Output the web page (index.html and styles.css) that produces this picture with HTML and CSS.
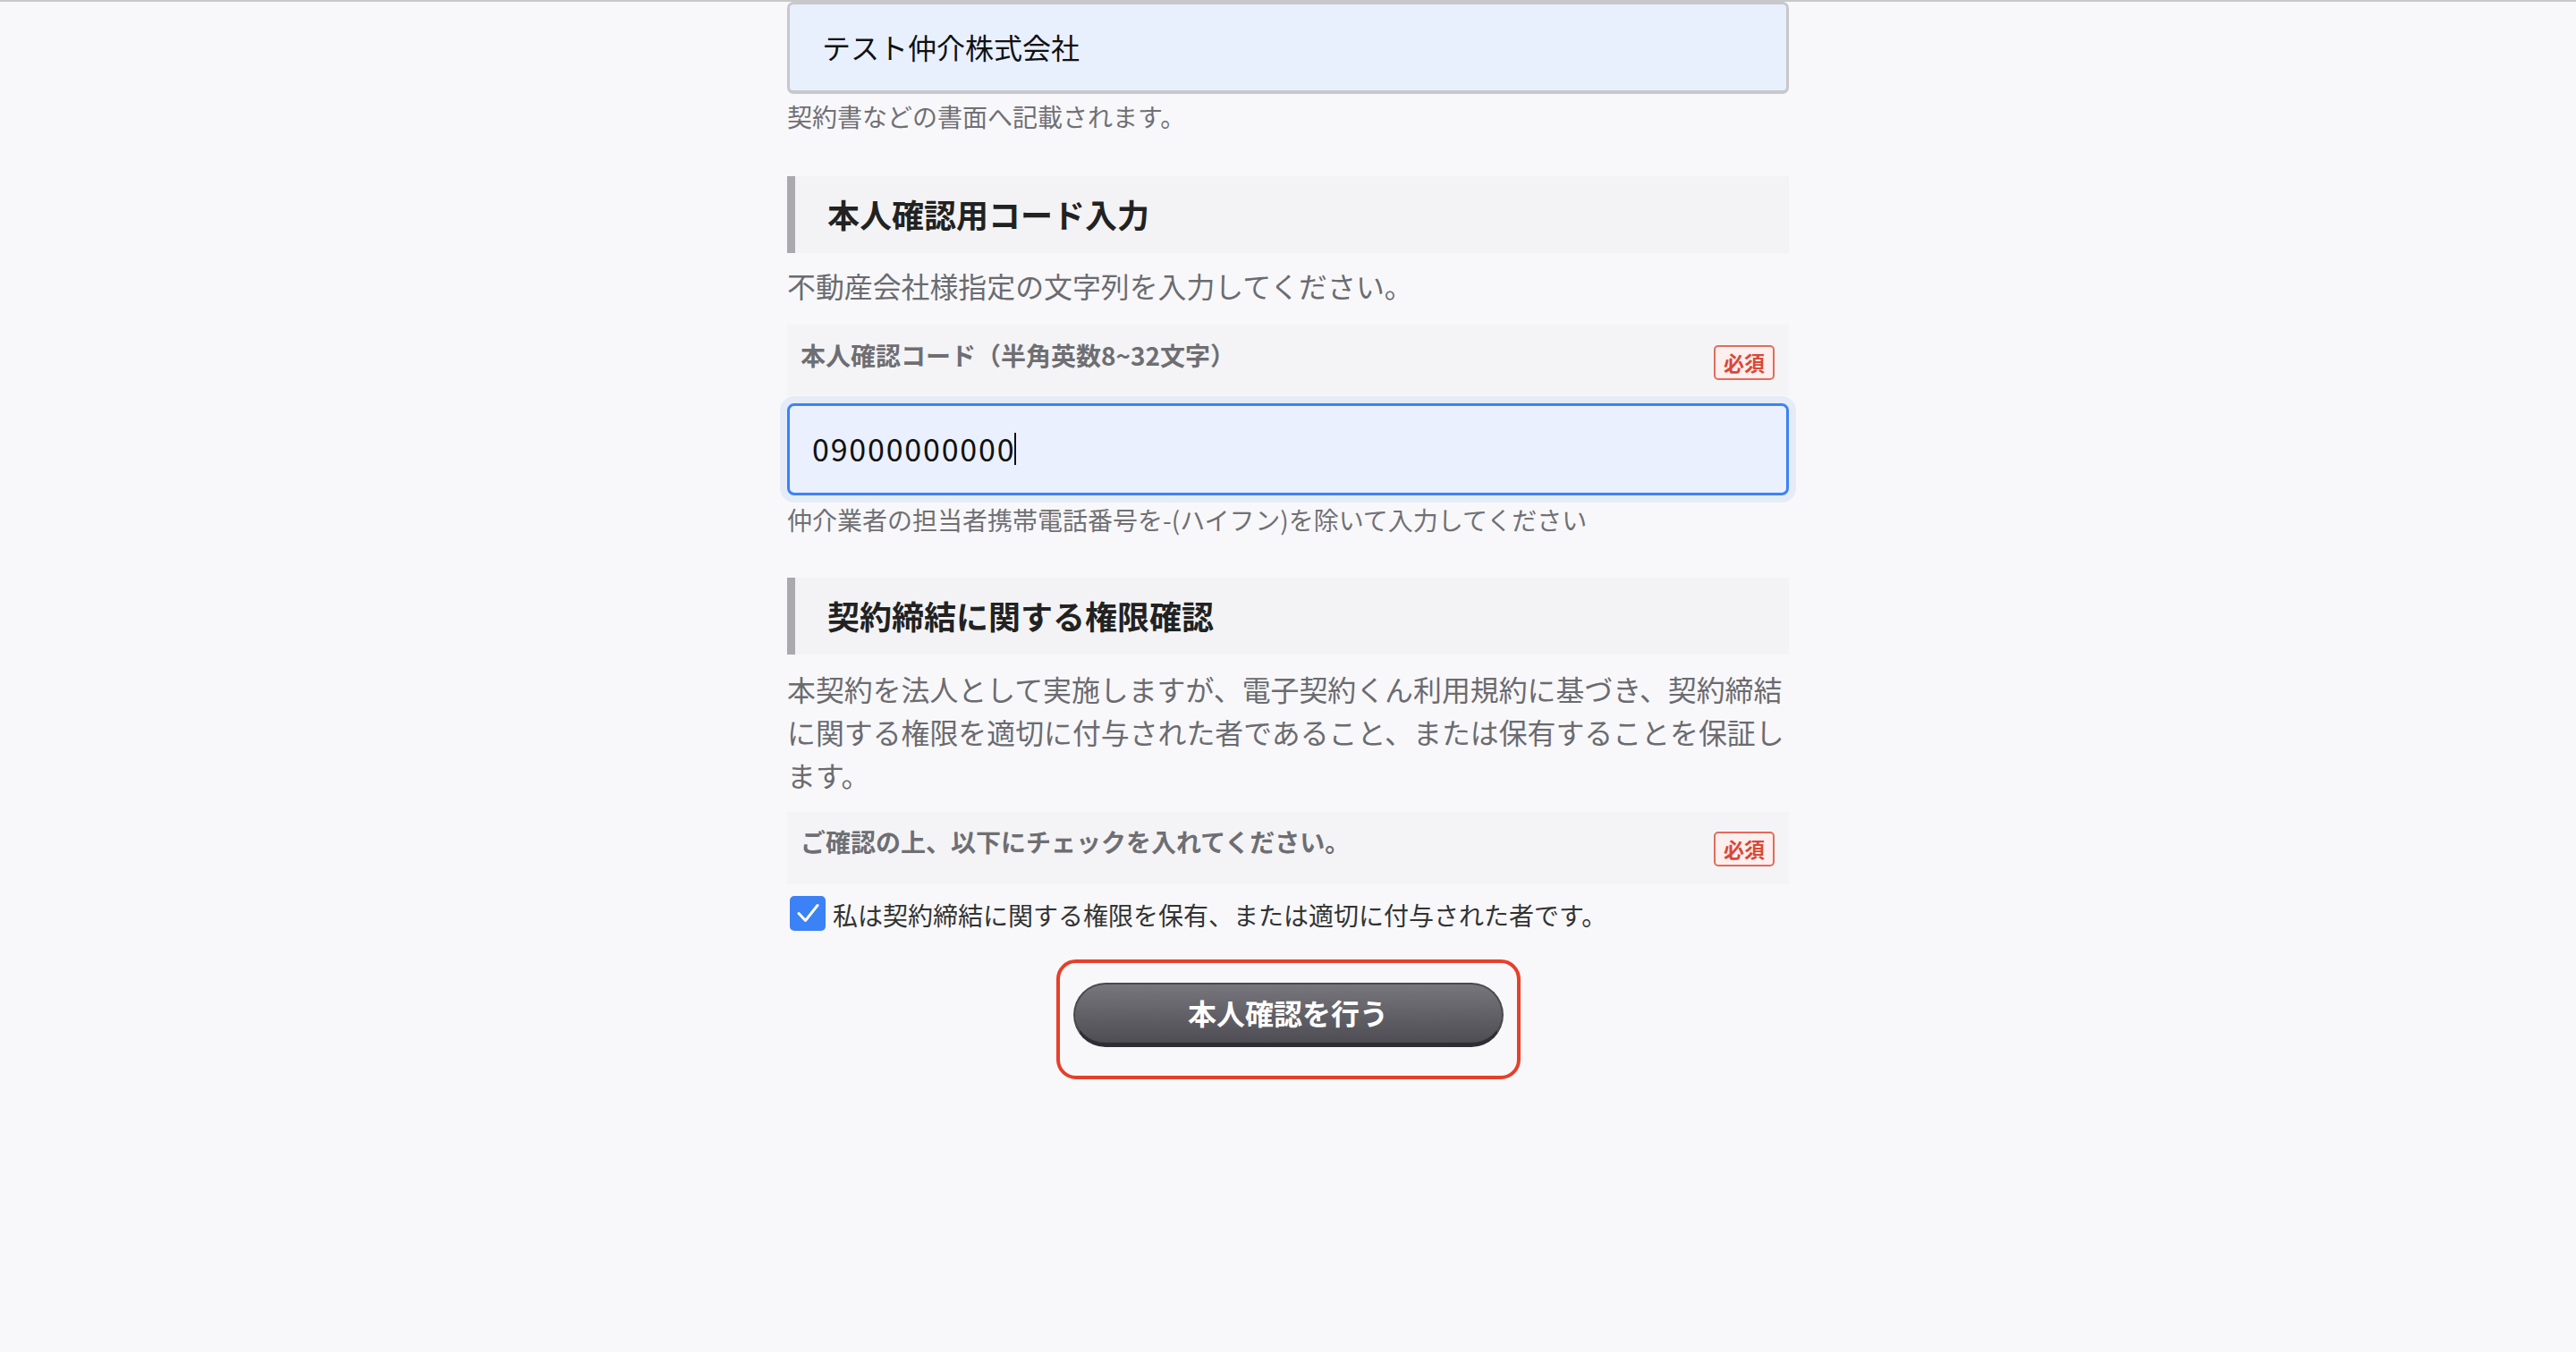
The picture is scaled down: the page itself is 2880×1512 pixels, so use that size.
FILE: index.html
```html
<!DOCTYPE html>
<html lang="ja">
<head>
<meta charset="utf-8">
<title>本人確認</title>
<link rel="stylesheet" href="styles.css">
</head>
<body>
<main class="form">
  <div class="field">テスト仲介株式会社</div>
  <p class="helper helper--first">契約書などの書面へ記載されます。</p>

  <h2 class="section-head">本人確認用コード入力</h2>
  <p class="desc">不動産会社様指定の文字列を入力してください。</p>
  <div class="label-box">
    <span class="label-text">本人確認コード（半角英数8~32文字）</span>
    <span class="badge">必須</span>
  </div>
  <div class="field field--focus"><span class="code">09000000000</span><span class="caret"></span></div>
  <p class="helper">仲介業者の担当者携帯電話番号を-(ハイフン)を除いて入力してください</p>

  <h2 class="section-head section-head--second">契約締結に関する権限確認</h2>
  <p class="desc desc--para">本契約を法人として実施しますが、電子契約くん利用規約に基づき、契約締結に関する権限を適切に付与された者であること、または保有することを保証します。</p>
  <div class="label-box label-box--second">
    <span class="label-text">ご確認の上、以下にチェックを入れてください。</span>
    <span class="badge">必須</span>
  </div>
  <label class="check-row">
    <span class="checkbox">
      <svg viewBox="0 0 40 39" width="40" height="39"><path d="M10 19.5 L17.5 27.5 L31 10.5" fill="none" stroke="#fff" stroke-width="3" stroke-linecap="round" stroke-linejoin="round"/></svg>
    </span>
    <span class="check-text">私は契約締結に関する権限を保有、または適切に付与された者です。</span>
  </label>

  <div class="highlight">
    <button class="submit" type="button">本人確認を行う</button>
  </div>
</main>
</body>
</html>
```

FILE: styles.css
```css
html, body {
  margin: 0;
  padding: 0;
}

body {
  background: #f8f8fa;
  border-top: 2px solid #c8c8cc;
  min-height: 1510px;
  font-family: "Noto Sans CJK JP", "Noto Sans", sans-serif;
  color: #222;
}

.form {
  width: 1120px;
  margin: 0 auto;
  display: flex;
  flex-direction: column;
}

.field {
  box-sizing: border-box;
  height: 103px;
  border: 3px solid #c8c8cc;
  border-bottom-width: 4px;
  border-radius: 7px;
  background: #e8f0fe;
  padding: 0 36px 3px;
  display: flex;
  align-items: center;
  font-size: 32px;
  color: #111;
}

.field--focus {
  margin-top: 9px;
  border: 3px solid #3b82f6;
  border-radius: 8px;
  background: #eaf0fd;
  box-shadow: 0 0 0 8px #e5ecf8;
  padding: 0 25px 2px;
}

.code {
  font-size: 34px;
  letter-spacing: 1.8px;
}

.caret {
  display: inline-block;
  width: 2px;
  height: 36px;
  background: #111;
  margin-left: -1px;
}

.helper {
  margin: 7px 0 0;
  font-size: 28px;
  line-height: 40px;
  color: #707075;
}

.helper--first {
  margin-top: 5px;
}

.section-head {
  box-sizing: border-box;
  margin: 47px 0 0;
  height: 86px;
  border-left: 9px solid #aaaaae;
  background: #f3f3f5;
  padding: 0 0 3px 36px;
  display: flex;
  align-items: center;
  font-size: 36px;
  font-weight: 700;
  color: #222;
}

.section-head--second {
  margin-top: 45px;
}

.desc {
  margin: 12px 0 0;
  font-size: 31.9px;
  line-height: 48px;
  color: #6b6b70;
}

.desc--para {
  margin-top: 14px;
}

.label-box {
  margin-top: 20px;
  background: #f4f4f6;
  padding: 14px 16px 17px 15px;
  display: flex;
  justify-content: space-between;
  align-items: flex-start;
}

.label-box--second {
  margin-top: 18px;
  padding-top: 13px;
  padding-bottom: 20px;
}

.label-text {
  font-size: 28px;
  line-height: 40px;
  font-weight: 700;
  color: #6e6e73;
}

.badge {
  box-sizing: border-box;
  margin-top: 9px;
  width: 68px;
  height: 39px;
  border: 2px solid #e36b5c;
  border-radius: 5px;
  background: #fdefed;
  color: #d9483a;
  font-size: 23px;
  font-weight: 700;
  display: flex;
  align-items: center;
  justify-content: center;
  padding-bottom: 2px;
}

.check-row {
  margin-top: 12px;
  height: 40px;
  display: flex;
  align-items: center;
  gap: 8px;
  padding-left: 3px;
}

.checkbox {
  width: 40px;
  height: 39px;
  border-radius: 5px;
  background: #3b82f6;
  display: flex;
}

.check-text {
  font-size: 28px;
  line-height: 36px;
  padding-top: 4px;
  color: #333;
}

.highlight {
  box-sizing: border-box;
  width: 519px;
  margin: 32px auto 0;
  border: 4px solid #e5402b;
  border-radius: 22px;
  padding: 22px 15px 32px;
}

.submit {
  display: block;
  width: 100%;
  height: 72px;
  border: 2px solid #4a4950;
  border-bottom: 5px solid #2f2e35;
  border-radius: 36px;
  background: linear-gradient(#77767c, #4e4d54);
  color: #fff;
  font-family: "Noto Sans CJK JP", "Noto Sans", sans-serif;
  font-size: 32px;
  font-weight: 700;
  padding: 0 0 3px;
}
```
